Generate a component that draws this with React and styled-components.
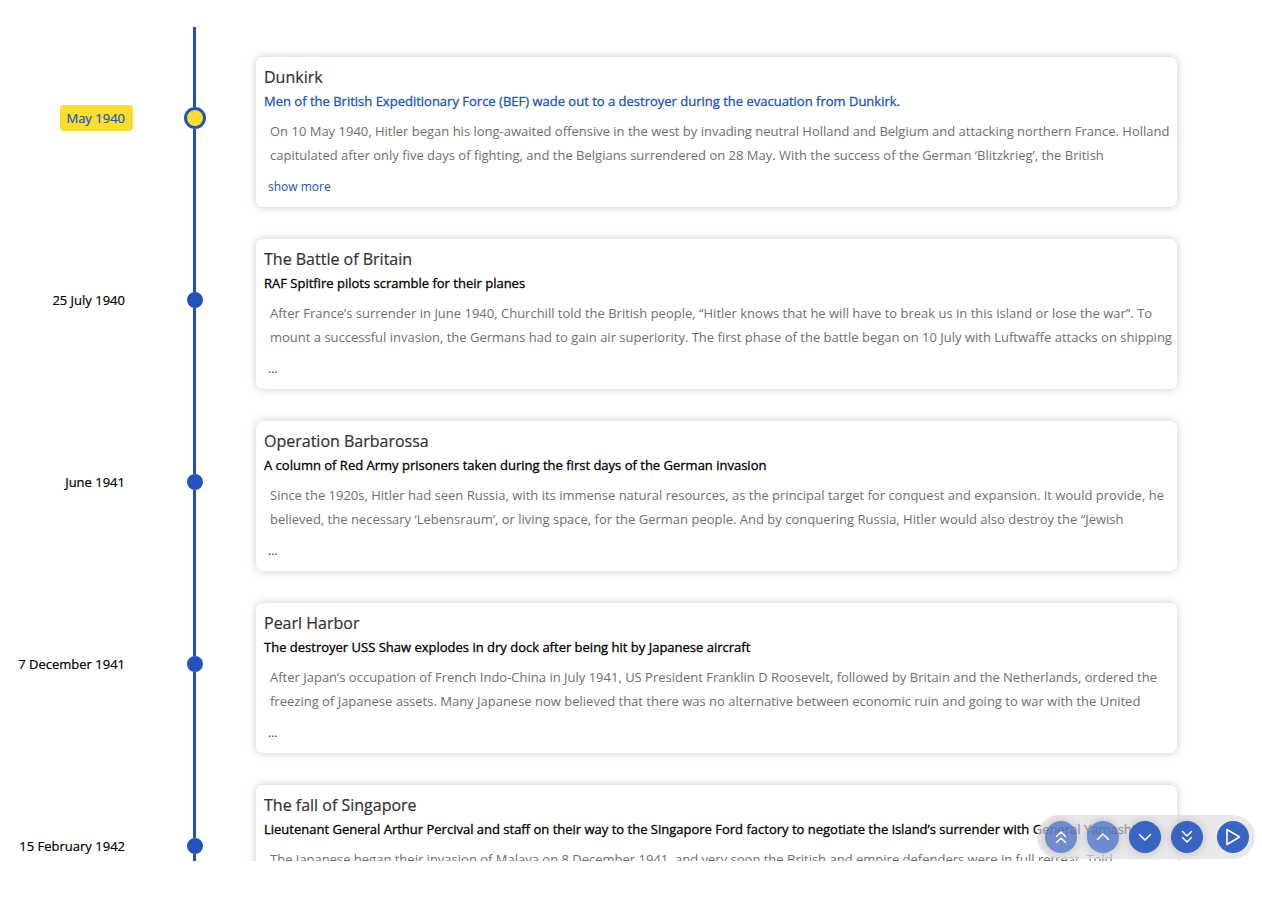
import React from 'react';
import styled, { createGlobalStyle } from 'styled-components';

const blue = '#2153bb';
const yellow = '#fadd33';

const GlobalStyle = createGlobalStyle`
  * { box-sizing: border-box; }
  body {
    margin: 0;
    background: #fefffe;
    font-family: "Open Sans", "Noto Sans", sans-serif;
  }
`;

const Page = styled.div`
  height: 100vh;
  padding: 27px 0 37px;
`;

const Timeline = styled.main`
  height: 100%;
  overflow: hidden;
`;

const Row = styled.section`
  display: grid;
  grid-template-columns: 133px 22px minmax(0, 1fr);
  column-gap: 51px;
  min-height: 182px;
  padding-right: 85px;
`;

const DateCell = styled.div`
  display: flex;
  align-items: center;
  justify-content: flex-end;
`;

const DateLabel = styled.time`
  padding: 0 8px 0 6px;
  border-radius: 4px;
  font-size: 13px;
  font-weight: 500;
  line-height: 26px;
  white-space: nowrap;
  color: ${(p) => (p.$active ? blue : '#000')};
  background: ${(p) => (p.$active ? yellow : 'transparent')};
  -webkit-text-stroke: 0.2px currentColor;
`;

const Marker = styled.div`
  display: flex;
  flex-direction: column;
  align-items: center;
`;

const LineSegment = styled.span`
  flex: 1;
  align-self: flex-start;
  width: 3px;
  margin-left: 9px;
  background: ${blue};
`;

const Dot = styled.button`
  width: ${(p) => (p.$active ? 22 : 16)}px;
  height: ${(p) => (p.$active ? 22 : 16)}px;
  padding: 0;
  border: 3px solid ${blue};
  border-radius: 50%;
  background: ${(p) => (p.$active ? yellow : blue)};
`;

const Card = styled.article`
  margin: 30px 0 2px -1px;
  padding: 8px 2px 8px 8px;
  border-radius: 7px;
  background: #fefffe;
  box-shadow: 0 0 10px rgba(0, 0, 0, 0.2);
`;

const Title = styled.h2`
  margin: 0;
  font-size: 16px;
  font-weight: 500;
  line-height: 24px;
  color: #323232;
  -webkit-text-stroke: 0.2px currentColor;
`;

const Subtitle = styled.h3`
  margin: 0;
  font-size: 13px;
  font-weight: 500;
  line-height: 24px;
  color: ${(p) => (p.$active ? blue : '#000')};
  -webkit-text-stroke: 0.3px currentColor;
`;

const Description = styled.p`
  height: 48px;
  margin: 6px 0 8px;
  padding-left: 6px;
  overflow: hidden;
  font-size: 13px;
  line-height: 24px;
  color: #6f6f6f;
`;

const More = styled.button`
  display: block;
  padding: 0 4px;
  border: 0;
  background: none;
  font-family: inherit;
  font-size: 12px;
  line-height: 24px;
  color: ${(p) => (p.$active ? blue : '#323232')};
`;

const Toolbar = styled.nav`
  position: fixed;
  right: 7px;
  bottom: 39px;
  display: flex;
  align-items: center;
  gap: 10px;
  height: 44px;
  padding: 0 6px 0 8px;
  border-radius: 22px;
  background: rgba(222, 222, 226, 0.7);
`;

const ToolButton = styled.button`
  display: grid;
  place-items: center;
  width: 32px;
  height: 32px;
  padding: 0;
  border: 0;
  border-radius: 50%;
  color: #fff;
  background: #3964c1;
  box-shadow: 0 0 10px rgba(0, 0, 0, 0.2);

  &:disabled {
    background: rgba(57, 100, 193, 0.7);
  }

  &:last-child {
    margin-left: 4px;
    box-shadow: none;
  }
`;

const Icon = styled.svg`
  display: block;
  fill: none;
  stroke: currentColor;
  stroke-width: ${(p) => p.$weight || 1.5};
  stroke-linecap: round;
  stroke-linejoin: round;
`;

const events = [
  {
    date: 'May 1940',
    title: 'Dunkirk',
    subtitle: 'Men of the British Expeditionary Force (BEF) wade out to a destroyer during the evacuation from Dunkirk.',
    text: 'On 10 May 1940, Hitler began his long-awaited offensive in the west by invading neutral Holland and Belgium and attacking northern France. Holland capitulated after only five days of fighting, and the Belgians surrendered on 28 May. With the success of the German ‘Blitzkrieg’, the British',
    active: true,
  },
  {
    date: '25 July 1940',
    title: 'The Battle of Britain',
    subtitle: 'RAF Spitfire pilots scramble for their planes',
    text: 'After France’s surrender in June 1940, Churchill told the British people, “Hitler knows that he will have to break us in this island or lose the war”. To mount a successful invasion, the Germans had to gain air superiority. The first phase of the battle began on 10 July with Luftwaffe attacks on shipping',
  },
  {
    date: 'June 1941',
    title: 'Operation Barbarossa',
    subtitle: 'A column of Red Army prisoners taken during the first days of the German invasion',
    text: 'Since the 1920s, Hitler had seen Russia, with its immense natural resources, as the principal target for conquest and expansion. It would provide, he believed, the necessary ‘Lebensraum’, or living space, for the German people. And by conquering Russia, Hitler would also destroy the “Jewish',
  },
  {
    date: '7 December 1941',
    title: 'Pearl Harbor',
    subtitle: 'The destroyer USS Shaw explodes in dry dock after being hit by Japanese aircraft',
    text: 'After Japan’s occupation of French Indo-China in July 1941, US President Franklin D Roosevelt, followed by Britain and the Netherlands, ordered the freezing of Japanese assets. Many Japanese now believed that there was no alternative between economic ruin and going to war with the United',
  },
  {
    date: '15 February 1942',
    title: 'The fall of Singapore',
    subtitle: 'Lieutenant General Arthur Percival and staff on their way to the Singapore Ford factory to negotiate the island’s surrender with General Yamashita',
    text: 'The Japanese began their invasion of Malaya on 8 December 1941, and very soon the British and empire defenders were in full retreat. Told',
  },
];

function TimelineEvent({ date, title, subtitle, text, active }) {
  return (
    <Row>
      <DateCell>
        <DateLabel $active={active}>{date}</DateLabel>
      </DateCell>
      <Marker>
        <LineSegment />
        <Dot type="button" aria-label={title} $active={active} />
        <LineSegment />
      </Marker>
      <Card>
        <Title>{title}</Title>
        <Subtitle $active={active}>{subtitle}</Subtitle>
        <Description>{text}</Description>
        <More type="button" $active={active}>{active ? 'show more' : '...'}</More>
      </Card>
    </Row>
  );
}

const controls = [
  { label: 'First event', path: 'M5.5 9.5L10 5L14.5 9.5M5.5 15.5L10 11L14.5 15.5', disabled: true },
  { label: 'Previous event', path: 'M4.5 12.5L10 7L15.5 12.5', disabled: true },
  { label: 'Next event', path: 'M4.5 7.5L10 13L15.5 7.5' },
  { label: 'Last event', path: 'M5.5 4.5L10 9L14.5 4.5M5.5 10.5L10 15L14.5 10.5' },
  { label: 'Play slideshow', path: 'M4 2.5L16.5 10L4 17.5Z', weight: 1.6 },
];

export default function App() {
  return (
    <Page>
      <GlobalStyle />
      <Timeline>
        {events.map((event) => (
          <TimelineEvent key={event.title} {...event} />
        ))}
      </Timeline>
      <Toolbar aria-label="Timeline controls">
        {controls.map(({ label, path, disabled, weight }) => (
          <ToolButton key={label} type="button" aria-label={label} disabled={disabled}>
            <Icon width="20" height="20" viewBox="0 0 20 20" $weight={weight}>
              <path d={path} />
            </Icon>
          </ToolButton>
        ))}
      </Toolbar>
    </Page>
  );
}
